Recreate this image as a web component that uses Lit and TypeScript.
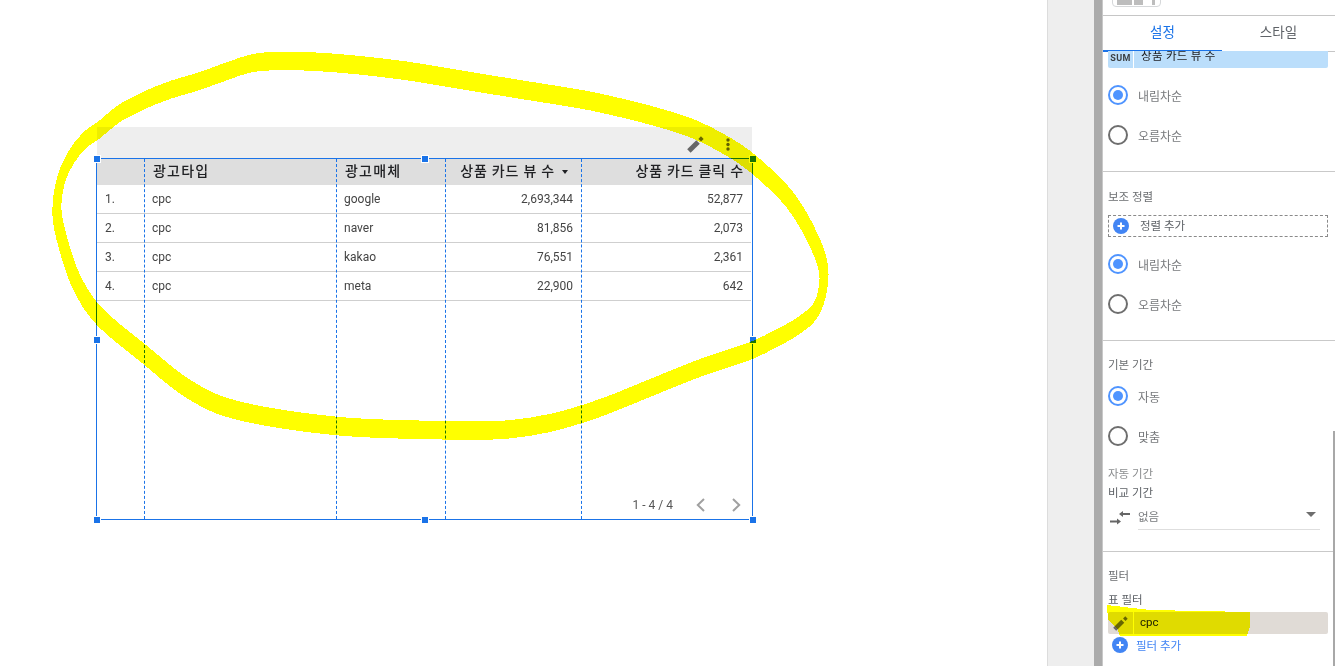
import { LitElement, html, css } from "lit";
import { customElement } from "lit/decorators.js";

// Centre line of the hand-drawn highlighter loop, on the page's pixel grid.
const LOOP: [number, number][] = [
  [99, 130], [120, 113], [145, 100], [170, 90], [200, 81], [225, 72], [260, 62], [320, 62], [400, 70],
  [480, 83], [530, 91], [600, 103], [680, 124], [720, 142], [752, 163], [790, 200], [815, 243],
  [824, 275], [817, 308], [798, 326], [775, 339], [750, 351], [700, 368], [650, 388], [600, 408],
  [550, 423], [500, 430], [430, 430], [337, 426], [240, 411], [190, 390], [144, 354],
  [100, 317], [78, 285], [65, 250], [57, 213], [61, 180], [72, 156], [85, 140], [99, 130],
];

// The brush is a slanted ellipse: half as wide as tall, tilted up to the right.
const BRUSH_X = 0.5;
const BRUSH_K = -0.45;

function smoothPath(pts: [number, number][]): string {
  const q = pts.map(([x, y]) => [x / BRUSH_X, y - BRUSH_K * x]);
  let d = `M${q[0][0]} ${q[0][1]}`;
  for (let i = 0; i < q.length - 1; i++) {
    const p0 = q[Math.max(i - 1, 0)];
    const p1 = q[i];
    const p2 = q[i + 1];
    const p3 = q[Math.min(i + 2, q.length - 1)];
    const c1x = p1[0] + (p2[0] - p0[0]) / 6;
    const c1y = p1[1] + (p2[1] - p0[1]) / 6;
    const c2x = p2[0] - (p3[0] - p1[0]) / 6;
    const c2y = p2[1] - (p3[1] - p1[1]) / 6;
    d += `C${c1x} ${c1y} ${c2x} ${c2y} ${p2[0]} ${p2[1]}`;
  }
  return d;
}

const rows = [
  ["1.", "cpc", "google", "2,693,344", "52,877"],
  ["2.", "cpc", "naver", "81,856", "2,073"],
  ["3.", "cpc", "kakao", "76,551", "2,361"],
  ["4.", "cpc", "meta", "22,900", "642"],
];

@customElement("app-root")
export class AppRoot extends LitElement {
  static styles = css`
    :host { display: block; width: 1335px; height: 666px; overflow: hidden; position: relative; background: #fff; font-family: Roboto, "Noto Sans CJK KR", sans-serif; }
    .page { display: flex; width: 1335px; height: 666px; }
    .canvas { position: relative; width: 1047px; height: 666px; background: #fff; flex: none; }
    .gutter { width: 47px; flex: none; background: #eeeeee; border-left: 1px solid #dcdcdc; box-sizing: border-box; }
    .rail { width: 8px; flex: none; background: #ababab; }
    .panel { flex: 1; background: #fff; border-left: 1px solid #c8c8c8; display: flex; flex-direction: column; height: 666px; overflow: hidden; color: #5f6368; font-size: 11.5px; }

    /* Chart on the free canvas */
    .toolbar { position: absolute; left: 97px; top: 127px; width: 655px; height: 31px; background: #eeeeee; display: flex; justify-content: flex-end; align-items: center; gap: 22px; padding: 4px 22px 0 0; box-sizing: border-box; }
    .toolbar svg { display: block; }
    .chart { position: absolute; left: 96px; top: 158px; width: 657px; height: 362px; box-sizing: border-box; border: 1px solid #1a73e8; display: grid; grid-template-rows: 26px repeat(4, 29px) 1fr; }
    .row { display: grid; grid-template-columns: 47px 192px 109px 136px 171px; border-bottom: 1px solid #cfcfcf; width: 654px; font-size: 12px; color: #444; align-items: center; box-sizing: border-box; height: 29px; }
    .row > div { padding: 0 8px; white-space: nowrap; }
    .head { background: #dedede; height: 26px; border-bottom: 0; width: 655px; color: #202124; font-size: 14px; letter-spacing: 1.2px; padding-bottom: 5px; font-family: "Noto Sans CJK KR", sans-serif; font-weight: 500; }
    .row.head > div { padding-left: 9px; }
    .num { text-align: right; }
    .row.head > .num { letter-spacing: .9px; padding-left: 0; }
    .row > .lastnum { padding-right: 9px; }
    .row.head > .lastnum { padding-right: 8px; }
    .row.head > .sorted { padding-right: 13px; }
    .arrow { display: inline-block; margin-left: 7px; width: 0; height: 0; border-left: 3.5px solid transparent; border-right: 3.5px solid transparent; border-top: 4px solid #202124; vertical-align: 2px; }
    .pager { position: absolute; right: 0; bottom: 0; height: 28px; display: flex; align-items: center; padding-right: 9px; font-size: 12px; }
    .pager span { margin-right: 21px; color: #555; }
    .pager svg { display: block; }
    .pager .next { margin-left: 21px; }
    .vline { position: absolute; width: 0; top: 159px; height: 360px; border-left: 1px dashed #1a73e8; }
    .handle { position: absolute; width: 6px; height: 6px; background: #1a73e8; border: 1px solid #fff; }

    .scribble { position: absolute; left: 0; top: 0; width: 1335px; height: 666px; mix-blend-mode: multiply; pointer-events: none; }

    /* Property panel */
    .picker { height: 15px; flex: none; border-bottom: 1px solid #c6c6c6; position: relative; box-sizing: content-box; }
    .picker i { position: absolute; left: 9px; top: -8px; width: 49px; height: 15px; border: 1px solid #d6d8da; border-radius: 4px; box-sizing: border-box; }
    .picker u { position: absolute; top: 0; height: 5px; background: #bdbdbd; }
    .tabs { display: grid; grid-template-columns: 119px 1fr; height: 36px; flex: none; border-bottom: 1px solid #c6c6c6; box-sizing: border-box; font-size: 13.5px; font-family: "Noto Sans CJK KR", sans-serif; }
    .tab { display: flex; align-items: center; justify-content: center; padding-bottom: 6px; color: #5f6368; box-sizing: border-box; }
    .tab.on { color: #1a73e8; border-bottom: 2px solid #1a73e8; margin-bottom: -1px; height: 36px; padding-bottom: 5px; }
    .sumchip { margin: -1px 7px 0 5px; height: 17px; background: #bbdefb; display: flex; flex: none; overflow: hidden; border-radius: 0 0 2px 2px; color: #202124; }
    .sumchip b { width: 25px; border-right: 1px solid #fff; flex: none; font: 700 9px/15px Roboto, sans-serif; letter-spacing: .3px; color: #3c4043; text-align: center; }
    .sumchip span { padding-left: 7px; font-size: 11.5px; line-height: 11px; margin-top: 0; letter-spacing: .3px; }
    .section { border-bottom: 1px solid #c9c9c9; flex: none; box-sizing: border-box; padding: 0 5px; }
    .s1 { height: 104px; padding-top: 7px; }
    .s2 { height: 169px; padding-top: 18px; }
    .s3 { height: 211px; padding-top: 17px; }
    .s4 { border: 0; padding-top: 17px; }
    .radio { display: flex; align-items: center; gap: 10px; height: 40px; }
    .dot { width: 20px; height: 20px; border-radius: 50%; box-sizing: border-box; border: 2px solid #6e6e6e; flex: none; position: relative; }
    .dot.on { border-color: #4f94ff; }
    .dot.on::after { content: ""; position: absolute; left: 3px; top: 3px; width: 10px; height: 10px; background: #4f94ff; border-radius: 50%; }
    .radio span { color: #77797c; font-size: 12px; }
    .sec-title { color: #6b6e71; font-size: 11.5px; line-height: 14px; }
    .sec-title.muted { color: #8a8c8e; margin-top: 11px; }
    .sec-title.sub { color: #5f6368; margin-top: 5px; }
    .sec-title.filter { color: #5f6368; margin-top: 10px; }
    .add { display: flex; align-items: center; height: 22px; border: 1px dashed #8a8a8a; box-sizing: border-box; margin: 11px 2px 0 0; padding-left: 4px; gap: 11px; font-size: 11.5px; }
    .add span { margin-top: -2px; }
    .sp7 { height: 7px; }
    .sp4 { height: 4px; }
    .plus { width: 16px; height: 16px; flex: none; display: block; }
    .compare { display: flex; align-items: center; margin-top: 5px; }
    .compare > svg { margin-left: 2px; flex: none; }
    .select { flex: 1; height: 25px; margin: 0 10px 0 8px; border-bottom: 1px solid #dedede; display: flex; align-items: center; justify-content: space-between; box-sizing: border-box; color: #77797c; padding-right: 4px; }
    .select span { margin-top: -2px; }
    .caret { width: 0; height: 0; border-left: 5px solid transparent; border-right: 5px solid transparent; border-top: 5px solid #6e6e6e; margin-top: -6px; }
    .filter-row { display: flex; height: 22px; background: #e0dbd6; margin: 5px 2px 0 0; border-radius: 2px; align-items: center; color: #202124; font-size: 11px; }
    .ic { width: 25px; border-right: 1px solid #fff; height: 22px; display: flex; align-items: center; justify-content: center; flex: none; }
    .filter-row span { padding-left: 6px; margin-top: -2px; font-size: 11.5px; }
    .add-filter { display: flex; align-items: center; gap: 8px; padding-left: 4px; height: 21px; color: #4285f4; font-size: 11.5px; }
    .scrollmark { position: absolute; left: 1333px; top: 431px; width: 2px; height: 235px; background: #a8a8a8; }
  `;

  private pencil(size: number) {
    return html`<svg width=${size} height=${size} viewBox="0 0 16 16"><path d="M1.8 14.2 10.4 5.6" stroke="#666" stroke-width="4.6" fill="none"></path><path d="M12 4 14.4 1.6" stroke="#666" stroke-width="3.6" fill="none"></path></svg>`;
  }

  private radio(label: string, on: boolean) {
    return html`<div class="radio"><i class="dot ${on ? "on" : ""}"></i><span>${label}</span></div>`;
  }

  private plus() {
    return html`<svg class="plus" viewBox="0 0 16 16"><circle cx="8" cy="8" r="8" fill="#4285f4"></circle><path d="M8 4.5v7M4.5 8h7" stroke="#fff" stroke-width="2" fill="none"></path></svg>`;
  }

  render() {
    const cols = [144, 336, 445, 581];
    const hs: [number, number][] = [[97, 159], [425, 159], [753, 159], [97, 340], [753, 340], [97, 520], [425, 520], [753, 520]];
    return html`
      <div class="page">
        <div class="canvas">
          <div class="toolbar">
            ${this.pencil(17)}
            <svg width="4" height="13" viewBox="0 0 4 13"><circle cx="2" cy="2" r="1.7" fill="#616161"></circle><circle cx="2" cy="6.5" r="1.7" fill="#616161"></circle><circle cx="2" cy="11" r="1.7" fill="#616161"></circle></svg>
          </div>
          <div class="chart">
            <div class="row head">
              <div></div><div>광고타입</div><div>광고매체</div>
              <div class="num sorted">상품 카드 뷰 수<i class="arrow"></i></div>
              <div class="num lastnum">상품 카드 클릭 수</div>
            </div>
            ${rows.map((r) => html`<div class="row">
              <div>${r[0]}</div><div>${r[1]}</div><div>${r[2]}</div>
              <div class="num">${r[3]}</div><div class="num lastnum">${r[4]}</div>
            </div>`)}
            <div class="pager">
              <span>1 - 4 / 4</span>
              <svg width="14" height="14" viewBox="0 0 14 14"><path d="M10 1 3.8 7l6.2 6" fill="none" stroke="#a0a0a0" stroke-width="2"></path></svg>
              <svg class="next" width="14" height="14" viewBox="0 0 14 14"><path d="M4 1l6.2 6L4 13" fill="none" stroke="#a0a0a0" stroke-width="2"></path></svg>
            </div>
          </div>
          ${cols.map((x) => html`<i class="vline" style="left:${x}px"></i>`)}
          ${hs.map(([x, y]) => html`<i class="handle" style="left:${x - 4}px;top:${y - 4}px"></i>`)}
        </div>
        <div class="gutter"></div>
        <div class="rail"></div>
        <div class="panel">
          <div class="picker">
            <i></i>
            <u style="left:14px;width:15px"></u>
            <u style="left:31px;width:9px"></u>
            <u style="left:49px;width:3px"></u>
          </div>
          <div class="tabs"><div class="tab on">설정</div><div class="tab">스타일</div></div>
          <div class="sumchip"><b>SUM</b><span>상품 카드 뷰 수</span></div>
          <div class="section s1">
            ${this.radio("내림차순", true)}${this.radio("오름차순", false)}
          </div>
          <div class="section s2">
            <div class="sec-title">보조 정렬</div>
            <div class="add">${this.plus()}<span>정렬 추가</span></div>
            <div class="sp7"></div>
            ${this.radio("내림차순", true)}${this.radio("오름차순", false)}
          </div>
          <div class="section s3">
            <div class="sec-title">기본 기간</div>
            <div class="sp4"></div>
            ${this.radio("자동", true)}${this.radio("맞춤", false)}
            <div class="sec-title muted">자동 기간</div>
            <div class="sec-title sub">비교 기간</div>
            <div class="compare">
              <svg width="20" height="14" viewBox="0 0 20 14"><path d="M20 3H12.5M0 10.5h7.5" stroke="#666" stroke-width="2" fill="none"></path><path d="M9 3l4-3v6zM11 10.5l-4-3v6z" fill="#666"></path></svg>
              <div class="select"><span>없음</span><i class="caret"></i></div>
            </div>
          </div>
          <div class="section s4">
            <div class="sec-title">필터</div>
            <div class="sec-title filter">표 필터</div>
            <div class="filter-row"><div class="ic">${this.pencil(15)}</div><span>cpc</span></div>
            <div class="add-filter">${this.plus()}<span>필터 추가</span></div>
          </div>
        </div>
      </div>
      <i class="scrollmark"></i>
      <svg class="scribble" viewBox="0 0 1335 666" shape-rendering="crispEdges">
        <g transform="matrix(${BRUSH_X} ${BRUSH_K * BRUSH_X} 0 1 0 0)">
          <path d=${smoothPath(LOOP)} fill="none" stroke="#ffff00" stroke-width="18" stroke-linecap="round" stroke-linejoin="round"></path>
        </g>
        <path d="M1107 605 1150 610 1250 612 1250 627 1247 636 1120 636 1118 630 1108 620Z" fill="#ffff00"></path>
      </svg>
    `;
  }
}
